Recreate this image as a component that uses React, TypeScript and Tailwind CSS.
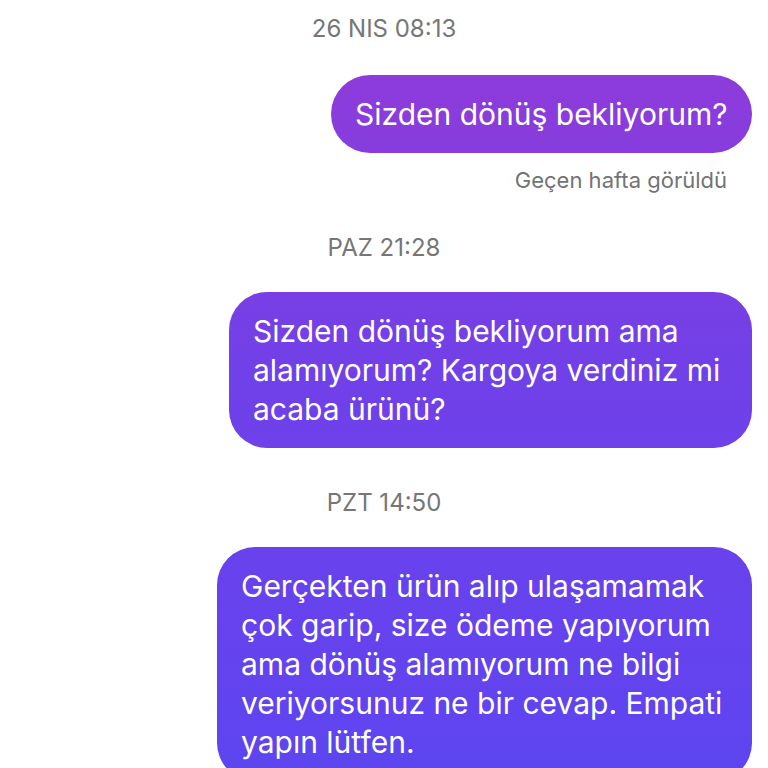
const bubbleBg =
  "bg-fixed bg-[linear-gradient(180deg,#933ad8_0%,#8a3cdc_15%,#7140e8_48%,#6443ee_85%,#5d45f0_100%)]";

function Stamp({ children, className = "" }: { children: React.ReactNode; className?: string }) {
  return (
    <div className={`text-center text-[24px] leading-[28px] text-[#767676] ${className}`}>
      {children}
    </div>
  );
}

function Bubble({
  lines,
  width,
  className = "",
  round = "rounded-[38px]",
}: {
  lines: string[];
  width: string;
  className?: string;
  round?: string;
}) {
  return (
    <div className={`flex justify-end pr-4 ${className}`}>
      <div
        className={`${width} ${round} ${bubbleBg} whitespace-nowrap px-6 py-[19.5px] text-[30px] leading-[39px] text-white`}
      >
        {lines.map((l, i) => (
          <div key={i}>{l}</div>
        ))}
      </div>
    </div>
  );
}

export default function App() {
  return (
    <div className="h-[768px] overflow-hidden bg-white font-['Inter','Noto_Sans',sans-serif] antialiased">
      <Stamp className="pt-[15px]">26 NIS 08:13</Stamp>

      <Bubble className="mt-[32px]" width="w-[421px]" round="rounded-full" lines={["Sizden dönüş bekliyorum?"]} />

      <div className="mt-[13px] pr-[41px] text-right text-[22px] leading-[28px] text-[#737373]">
        Geçen hafta görüldü
      </div>

      <Stamp className="mt-[40px]">PAZ 21:28</Stamp>

      <Bubble
        className="mt-[30px]"
        width="w-[523px]"
        lines={["Sizden dönüş bekliyorum ama", "alamıyorum? Kargoya verdiniz mi", "acaba ürünü?"]}
      />

      <Stamp className="mt-[41px]">PZT 14:50</Stamp>

      <Bubble
        className="mt-[30px]"
        width="w-[535px]"
        lines={[
          "Gerçekten ürün alıp ulaşamamak",
          "çok garip, size ödeme yapıyorum",
          "ama dönüş alamıyorum ne bilgi",
          "veriyorsunuz ne bir cevap. Empati",
          "yapın lütfen.",
        ]}
      />
    </div>
  );
}
